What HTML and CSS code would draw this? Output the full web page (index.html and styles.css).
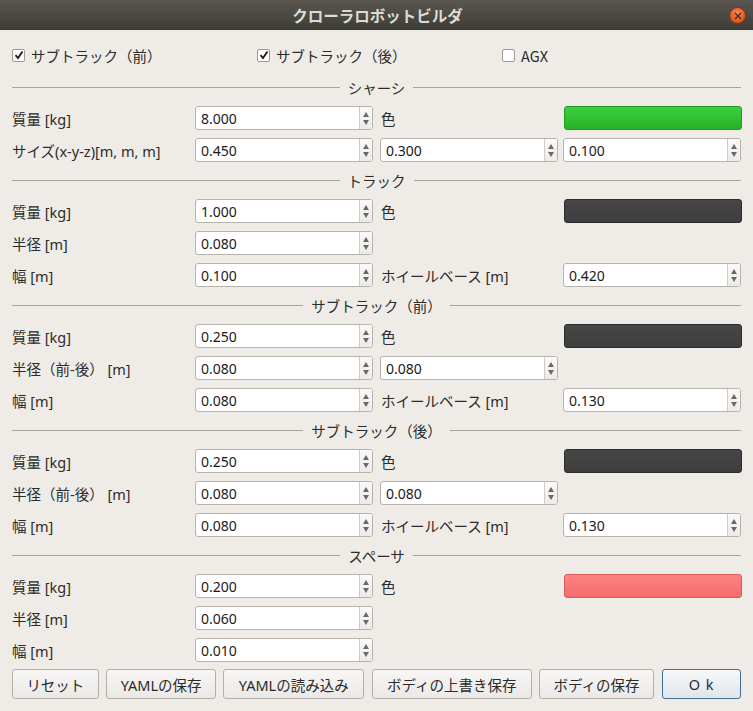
FILE: index.html
```html
<!DOCTYPE html>
<html lang="ja">
<head>
<meta charset="utf-8">
<title>クローラロボットビルダ</title>
<link rel="stylesheet" href="styles.css">
</head>
<body>
<div class="window">
  <div class="titlebar">
    <span class="title">クローラロボットビルダ</span>
    <span class="close"><svg width="8" height="8" viewBox="0 0 8 8"><path d="M1 1L7 7M7 1L1 7" stroke="#4a2a18" stroke-width="1.3" fill="none"/></svg></span>
  </div>
  <div class="content">
    <div class="checks">
      <label class="check"><span class="box"><svg width="10" height="10" viewBox="0 0 10 10"><path d="M1.5 5.2L4 8L8.5 1.5" stroke="#1a1a1a" stroke-width="1.8" fill="none"/></svg></span>サブトラック（前）</label>
      <label class="check"><span class="box"><svg width="10" height="10" viewBox="0 0 10 10"><path d="M1.5 5.2L4 8L8.5 1.5" stroke="#1a1a1a" stroke-width="1.8" fill="none"/></svg></span>サブトラック（後）</label>
      <label class="check"><span class="box"></span>AGX</label>
    </div>

    <div class="section first"><span>シャーシ</span></div>
    <div class="row">
      <span class="lbl">質量 [kg]</span>
      <div class="spin"><span class="val">8.000</span><span class="arrows"><i class="up"></i><i class="down"></i></span></div>
      <span class="lbl2">色</span>
      <div class="color green"></div>
    </div>
    <div class="row">
      <span class="lbl">サイズ(x-y-z)[m, m, m]</span>
      <div class="spin"><span class="val">0.450</span><span class="arrows"><i class="up"></i><i class="down"></i></span></div>
      <div class="spin"><span class="val">0.300</span><span class="arrows"><i class="up"></i><i class="down"></i></span></div>
      <div class="spin"><span class="val">0.100</span><span class="arrows"><i class="up"></i><i class="down"></i></span></div>
    </div>

    <div class="section"><span>トラック</span></div>
    <div class="row">
      <span class="lbl">質量 [kg]</span>
      <div class="spin"><span class="val">1.000</span><span class="arrows"><i class="up"></i><i class="down"></i></span></div>
      <span class="lbl2">色</span>
      <div class="color dark"></div>
    </div>
    <div class="row">
      <span class="lbl">半径 [m]</span>
      <div class="spin"><span class="val">0.080</span><span class="arrows"><i class="up"></i><i class="down"></i></span></div>
    </div>
    <div class="row">
      <span class="lbl">幅 [m]</span>
      <div class="spin"><span class="val">0.100</span><span class="arrows"><i class="up"></i><i class="down"></i></span></div>
      <span class="lbl2">ホイールベース [m]</span>
      <div class="spin"><span class="val">0.420</span><span class="arrows"><i class="up"></i><i class="down"></i></span></div>
    </div>

    <div class="section"><span>サブトラック（前）</span></div>
    <div class="row">
      <span class="lbl">質量 [kg]</span>
      <div class="spin"><span class="val">0.250</span><span class="arrows"><i class="up"></i><i class="down"></i></span></div>
      <span class="lbl2">色</span>
      <div class="color dark"></div>
    </div>
    <div class="row">
      <span class="lbl">半径（前-後） [m]</span>
      <div class="spin"><span class="val">0.080</span><span class="arrows"><i class="up"></i><i class="down"></i></span></div>
      <div class="spin"><span class="val">0.080</span><span class="arrows"><i class="up"></i><i class="down"></i></span></div>
    </div>
    <div class="row">
      <span class="lbl">幅 [m]</span>
      <div class="spin"><span class="val">0.080</span><span class="arrows"><i class="up"></i><i class="down"></i></span></div>
      <span class="lbl2">ホイールベース [m]</span>
      <div class="spin"><span class="val">0.130</span><span class="arrows"><i class="up"></i><i class="down"></i></span></div>
    </div>

    <div class="section"><span>サブトラック（後）</span></div>
    <div class="row">
      <span class="lbl">質量 [kg]</span>
      <div class="spin"><span class="val">0.250</span><span class="arrows"><i class="up"></i><i class="down"></i></span></div>
      <span class="lbl2">色</span>
      <div class="color dark"></div>
    </div>
    <div class="row">
      <span class="lbl">半径（前-後） [m]</span>
      <div class="spin"><span class="val">0.080</span><span class="arrows"><i class="up"></i><i class="down"></i></span></div>
      <div class="spin"><span class="val">0.080</span><span class="arrows"><i class="up"></i><i class="down"></i></span></div>
    </div>
    <div class="row">
      <span class="lbl">幅 [m]</span>
      <div class="spin"><span class="val">0.080</span><span class="arrows"><i class="up"></i><i class="down"></i></span></div>
      <span class="lbl2">ホイールベース [m]</span>
      <div class="spin"><span class="val">0.130</span><span class="arrows"><i class="up"></i><i class="down"></i></span></div>
    </div>

    <div class="section"><span>スペーサ</span></div>
    <div class="row">
      <span class="lbl">質量 [kg]</span>
      <div class="spin"><span class="val">0.200</span><span class="arrows"><i class="up"></i><i class="down"></i></span></div>
      <span class="lbl2">色</span>
      <div class="color pink"></div>
    </div>
    <div class="row">
      <span class="lbl">半径 [m]</span>
      <div class="spin"><span class="val">0.060</span><span class="arrows"><i class="up"></i><i class="down"></i></span></div>
    </div>
    <div class="row">
      <span class="lbl">幅 [m]</span>
      <div class="spin"><span class="val">0.010</span><span class="arrows"><i class="up"></i><i class="down"></i></span></div>
    </div>

    <div class="buttons">
      <button class="btn w-reset">リセット</button>
      <button class="btn w-ysave">YAMLの保存</button>
      <button class="btn w-yload">YAMLの読み込み</button>
      <button class="btn w-over">ボディの上書き保存</button>
      <button class="btn w-bsave">ボディの保存</button>
      <button class="btn ok w-ok">O k</button>
    </div>
  </div>
</div>
</body>
</html>
```

FILE: styles.css
```css
* { box-sizing: border-box; }
html, body { margin: 0; padding: 0; }
body {
  width: 753px;
  height: 711px;
  overflow: hidden;
  background: #efebe7;
  font-family: "Noto Sans", "Noto Sans CJK JP", sans-serif;
  font-size: 14.5px;
  color: #2b2b2b;
}
.window { width: 753px; height: 711px; }

.titlebar {
  height: 30px;
  background: linear-gradient(#59574f, #3e3d38);
  display: flex;
  align-items: center;
  justify-content: center;
  position: relative;
  border-bottom: 1px solid #3a3935;
}
.title {
  color: #dfdbd2;
  font-family: "Noto Sans CJK JP", sans-serif;
  font-weight: bold;
  font-size: 15.5px;
  margin-left: 2px;
}
.close {
  position: absolute;
  right: 7px;
  top: 7px;
  width: 17px;
  height: 17px;
  border-radius: 50%;
  background: radial-gradient(circle at 50% 35%, #f48a5a, #e2561c 70%, #c9460f);
  border: 1px solid #7a3512;
  display: flex;
  align-items: center;
  justify-content: center;
}

.content {
  padding: 13px 12px 0 12px;
  display: flex;
  flex-direction: column;
}

.checks {
  height: 24px;
  display: grid;
  grid-template-columns: 245px 245px 1fr;
  align-items: center;
}
.check {
  display: flex;
  align-items: center;
  gap: 6px;
  font-family: "Noto Sans CJK JP", sans-serif;
}
.box {
  width: 13px;
  height: 13px;
  background: #fff;
  border: 1px solid #9d9891;
  border-radius: 2px;
  display: flex;
  align-items: center;
  justify-content: center;
}

.section {
  height: 23px;
  margin: 7px 0;
  display: flex;
  align-items: center;
  gap: 8px;
  font-family: "Noto Sans CJK JP", sans-serif;
}
.section.first { margin-top: 9px; }
.section::before, .section::after {
  content: "";
  flex: 1;
  height: 1px;
  background: #a9a49d;
}

.row {
  height: 24px;
  display: grid;
  grid-template-columns: 183px 185px 183px 178px;
  align-items: center;
}
.row + .row { margin-top: 8px; }
.lbl, .lbl2 { white-space: nowrap; }
.lbl2 { padding-left: 1px; }

.spin {
  width: 178px;
  height: 24px;
  background: #fff;
  border: 1px solid #b7b2ab;
  border-radius: 3px;
  display: flex;
  align-items: stretch;
}
.val {
  flex: 1;
  padding-left: 5px;
  display: flex;
  align-items: center;
  color: #1a1a1a;
  font-size: 14px;
}
.arrows {
  width: 13px;
  border-left: 1px solid #cfcac4;
  background: linear-gradient(#fbfaf9, #ecebe9);
  border-radius: 0 2px 2px 0;
  display: flex;
  flex-direction: column;
  align-items: center;
  justify-content: center;
  gap: 3px;
}
.arrows i {
  width: 0;
  height: 0;
  border-left: 3.5px solid transparent;
  border-right: 3.5px solid transparent;
}
.arrows .up { border-bottom: 5px solid #6c6964; }
.arrows .down { border-top: 5px solid #6c6964; }

.color {
  width: 178px;
  height: 24px;
  border-radius: 3px;
  margin-left: 1px;
}
.green {
  background: linear-gradient(#3bd13b, #29b029);
  border: 1px solid #249a24;
}
.dark {
  background: linear-gradient(#464646, #3e3e3e);
  border: 1px solid #2c2c2c;
}
.pink {
  background: linear-gradient(#ff8282, #f46c6c);
  border: 1px solid #d95a5a;
}

.buttons {
  margin-top: 7px;
  height: 30px;
  display: flex;
  gap: 7px;
}
.btn {
  height: 30px;
  font-family: "Noto Sans", "Noto Sans CJK JP", sans-serif;
  font-size: 14.5px;
  color: #2b2b2b;
  background: linear-gradient(#f8f7f6, #ebe9e6);
  border: 1px solid #b4afa8;
  border-radius: 3px;
  padding: 0;
}
.btn.ok {
  border-color: #3f6f96;
  background: linear-gradient(#f6f8fa, #e1e6eb);
  letter-spacing: 1px;
}
.w-reset { width: 87px; }
.w-ysave { width: 111px; }
.w-yload { width: 141px; }
.w-over { width: 160px; margin-left: 1px; }
.w-bsave { width: 116px; }
.w-ok { width: 79px; margin-left: 1px; }
```
